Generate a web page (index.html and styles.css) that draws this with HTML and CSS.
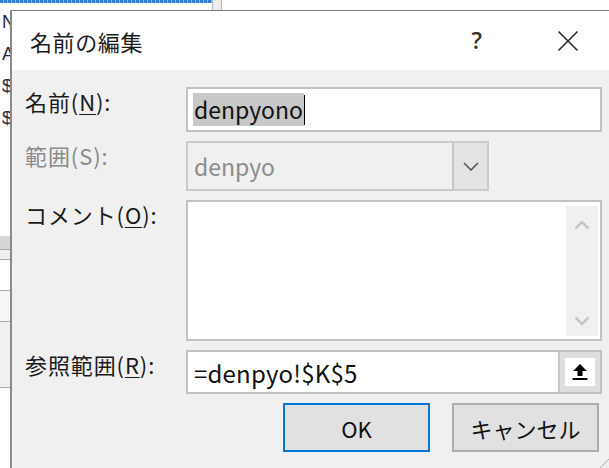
FILE: index.html
```html
<!DOCTYPE html>
<html lang="ja">
<head>
<meta charset="utf-8">
<title>名前の編集</title>
<link rel="stylesheet" href="styles.css">
</head>
<body>
<div class="sheet">
  <div class="sheet-top">
    <div class="marquee"></div>
    <div class="fill-handle"></div>
  </div>
  <div class="sheet-col">
    <div class="cell">N</div>
    <div class="cell">A</div>
    <div class="cell">$</div>
    <div class="cell">$</div>
    <div class="cell blank tall"></div>
    <div class="cell band-dark"></div>
    <div class="cell band-light"></div>
    <div class="cell band-white"></div>
    <div class="cell band-white2"></div>
    <div class="cell band-grey"></div>
  </div>
</div>

<div class="dialog">
  <div class="titlebar">
    <span class="title">名前の編集</span>
    <span class="help">?</span>
    <svg class="close" width="22" height="22" viewBox="0 0 22 22">
      <path d="M1.5 1.5 L20.5 20.5 M20.5 1.5 L1.5 20.5" stroke="#2b2b2b" stroke-width="1.6" fill="none"/>
    </svg>
  </div>

  <div class="content">
    <label class="lbl row-name">名前(<u>N</u>):</label>
    <div class="field name-field">
      <span class="selected">denpyono</span><span class="caret"></span>
    </div>

    <label class="lbl lbl-off row-scope">範囲(S):</label>
    <div class="combo">
      <span class="combo-text">denpyo</span>
      <span class="combo-btn">
        <svg width="16" height="9" viewBox="0 0 16 9">
          <path d="M1 1 L8 8 L15 1" stroke="#555" stroke-width="1.6" fill="none"/>
        </svg>
      </span>
    </div>

    <label class="lbl row-comment">コメント(<u>O</u>):</label>
    <div class="memo">
      <div class="memo-area"></div>
      <div class="scrollbar">
        <svg width="16" height="10" viewBox="0 0 16 10">
          <path d="M1.5 8.5 L8 2 L14.5 8.5" stroke="#c6c6c6" stroke-width="2.6" fill="none"/>
        </svg>
        <svg width="16" height="10" viewBox="0 0 16 10">
          <path d="M1.5 1.5 L8 8 L14.5 1.5" stroke="#c6c6c6" stroke-width="2.6" fill="none"/>
        </svg>
      </div>
    </div>

    <label class="lbl row-ref">参照範囲(<u>R</u>):</label>
    <div class="field ref-field">
      <span class="ref-text">=denpyo!$K$5</span>
      <span class="ref-btn">
        <span class="ref-btn-face">
          <svg width="18" height="18" viewBox="0 0 18 18">
            <path d="M9 1 L16 8 L11.5 8 L11.5 13 L6.5 13 L6.5 8 L2 8 Z" fill="#000"/>
            <rect x="1.5" y="15" width="15" height="2" fill="#000"/>
          </svg>
        </span>
      </span>
    </div>

    <div class="actions">
      <button class="btn btn-default" type="button">OK</button>
      <button class="btn" type="button">キャンセル</button>
    </div>
  </div>

  <svg class="grip" width="10" height="10" viewBox="0 0 10 10">
    <path d="M10 1 L1 10" stroke="#a8a8a8" stroke-width="1"/>
  </svg>
</div>
</body>
</html>
```

FILE: styles.css
```css
* { box-sizing: border-box; }

html, body {
  margin: 0;
  padding: 0;
  width: 609px;
  height: 468px;
  overflow: hidden;
  background: #fff;
}

body {
  position: relative;
  font-family: "Noto Sans CJK JP", "Noto Sans", sans-serif;
}

/* spreadsheet behind the dialog */
.sheet {
  width: 609px;
  height: 468px;
}

.sheet-top {
  height: 10px;
  display: flex;
  align-items: flex-start;
}

.marquee {
  width: 212px;
  height: 3px;
  background: repeating-linear-gradient(90deg, #2f7fd6 0 3px, #f0a040 3px 4px);
}

.fill-handle {
  width: 10px;
  height: 10px;
  background: #ededed;
  border-left: 1px solid #b8b8b8;
  border-right: 1px solid #b8b8b8;
}

.sheet-col {
  width: 10px;
  display: flex;
  flex-direction: column;
  overflow: hidden;
}

.cell {
  height: 32px;
  font-family: "Liberation Sans", Arial, sans-serif;
  font-size: 18px;
  line-height: 24px;
  color: #1f2a44;
  padding-left: 2px;
  white-space: nowrap;
}

.cell.tall { height: 98px; }
.cell.band-dark { height: 14px; background: #d6d6d6; border-bottom: 1px solid #a8a8a8; }
.cell.band-light { height: 10px; background: #f0f0f0; border-bottom: 1px solid #a8a8a8; }
.cell.band-white { height: 31px; background: #fff; border-bottom: 1px solid #a8a8a8; }
.cell.band-white2 { height: 31px; background: #f6f6f6; border-bottom: 1px solid #a8a8a8; }
.cell.band-grey { height: 66px; background: #f0f0f0; border-bottom: 1px solid #a8a8a8; }

/* dialog window floating over the sheet */
.dialog {
  position: absolute;
  left: 10px;
  top: 10px;
  width: 599px;
  height: 458px;
  border-left: 2px solid #8a8a8a;
  border-top: 1px solid #7a7a7a;
  background: #f0f0f0;
}

.titlebar {
  height: 59px;
  background: #fff;
  display: flex;
  align-items: center;
  padding-left: 18px;
}

.title {
  font-size: 22px;
  color: #1a1a1a;
  flex: 1;
  letter-spacing: 0.6px;
}

.help {
  font-family: "Open Sans", sans-serif;
  font-size: 23px;
  font-weight: 600;
  color: #333;
  margin-right: 75px;
  padding-bottom: 2px;
}

.close {
  margin-right: 30px;
}

.content {
  display: grid;
  grid-template-columns: 161px 416px;
  grid-template-rows: 45px 50px 141px 44px 49px;
  row-gap: 9px;
  padding: 17px 0 0 13px;
}

.lbl {
  font-size: 22px;
  line-height: 28px;
  color: #1a1a1a;
  letter-spacing: 0.9px;
}

.lbl u {
  text-decoration-thickness: 1px;
  text-underline-offset: 3px;
}

.lbl-off { color: #8a8a8a; }

.field {
  background: #fff;
  border: 2px solid #c2c2c2;
  display: flex;
  align-items: center;
  padding-left: 5px;
  font-size: 23px;
  color: #111;
}

.selected {
  background: #c8c8c8;
  line-height: 33px;
  padding: 0 1px;
}

.caret {
  width: 1px;
  height: 30px;
  background: #000;
}

.combo {
  width: 303px;
  border: 2px solid #cacaca;
  background: #f0f0f0;
  display: flex;
  align-items: stretch;
}

.combo-text {
  flex: 1;
  padding-left: 6px;
  font-size: 23px;
  line-height: 46px;
  color: #8c8c8c;
}

.combo-btn {
  width: 35px;
  background: #e3e3e3;
  border-left: 2px solid #c6c6c6;
  display: flex;
  align-items: center;
  justify-content: center;
}

.memo {
  border: 2px solid #c2c2c2;
  background: #fff;
  display: flex;
  padding: 4px 2px 3px 0;
}

.memo-area { flex: 1; }

.scrollbar {
  width: 32px;
  background: #f0f0f0;
  display: flex;
  flex-direction: column;
  align-items: center;
  justify-content: space-between;
  padding: 14px 0 10px;
}

.ref-field {
  padding-left: 6px;
  font-size: 24px;
}

.ref-text {
  flex: 1;
  letter-spacing: 0.2px;
}

.ref-btn {
  align-self: stretch;
  width: 42px;
  background: #dedede;
  border-left: 2px solid #c8c8c8;
  display: flex;
  align-items: center;
  justify-content: center;
}

.ref-btn-face {
  width: 30px;
  height: 28px;
  background: #fff;
  display: flex;
  align-items: center;
  justify-content: center;
}

.actions {
  grid-column: 2;
  display: flex;
  justify-content: flex-end;
  gap: 22px;
  padding-right: 3px;
}

.btn {
  width: 147px;
  height: 49px;
  background: #e1e1e1;
  border: 2px solid #adadad;
  font-family: "Noto Sans CJK JP", "Noto Sans", sans-serif;
  font-size: 22px;
  color: #111;
  padding: 0;
}

.btn-default {
  border-color: #0078d7;
}

.grip {
  position: absolute;
  right: 0;
  bottom: 0;
}
```
